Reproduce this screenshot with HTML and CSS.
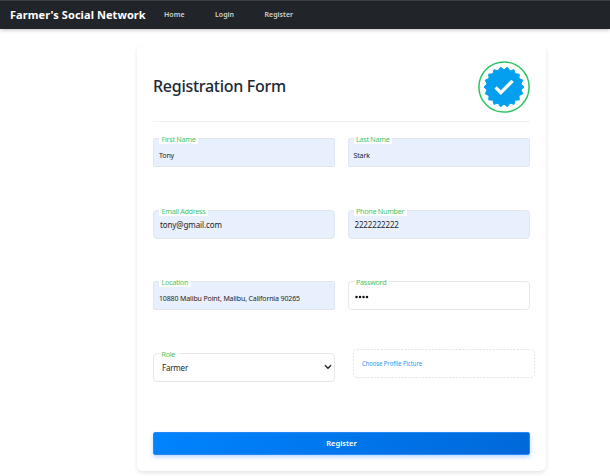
FILE: index.html
```html
<!DOCTYPE html>
<html lang="en">
<head>
<meta charset="utf-8">
<title>Farmer's Social Network</title>
<link rel="stylesheet" href="styles.css">
</head>
<body>
<nav class="navbar">
  <span class="brand">Farmer's Social Network</span>
  <span class="link home">Home</span>
  <span class="link login">Login</span>
  <span class="link register">Register</span>
</nav>
<main class="card">
  <header class="head">
    <h1>Registration Form</h1>
    <svg class="badge" viewBox="-26 -26 52 52">
      <circle r="25.1" fill="#fff" stroke="#2cc563" stroke-width="1.5"/>
      <path fill="#059ff0" stroke="#059ff0" stroke-width="1" stroke-linejoin="round" d="M20 0L16.94 2.99 18.79 6.84 14.9 8.6 15.32 12.86 11.06 13.18 10 17.32 5.88 16.16 3.47 19.7 0 17.2 -3.47 19.7 -5.88 16.16 -10 17.32 -11.06 13.18 -15.32 12.86 -14.9 8.6 -18.79 6.84 -16.94 2.99 -20 0 -16.94 -2.99 -18.79 -6.84 -14.9 -8.6 -15.32 -12.86 -11.06 -13.18 -10 -17.32 -5.88 -16.16 -3.47 -19.7 0 -17.2 3.47 -19.7 5.88 -16.16 10 -17.32 11.06 -13.18 15.32 -12.86 14.9 -8.6 18.79 -6.84 16.94 -2.99Z"/>
      <path d="M-8.4 .4L-3.2 5.6 8.6 -6.2" fill="none" stroke="#fff" stroke-width="3.3"/>
    </svg>
  </header>
  <form class="grid">
    <div class="field filled square"><label>First Name</label><span class="value small">Tony</span></div>
    <div class="field filled square"><label>Last Name</label><span class="value small">Stark</span></div>
    <div class="field filled"><label>Email Address</label><span class="value v-mail">tony@gmail.com</span></div>
    <div class="field filled"><label>Phone Number</label><span class="value v-phone">2222222222</span></div>
    <div class="field filled square"><label>Location</label><span class="value small">10880 Malibu Point, Malibu, California 90265</span></div>
    <div class="field"><label>Password</label>
      <svg class="dots" viewBox="0 0 14 4"><g fill="#111"><circle cx="1.5" cy="2" r="1.25"/><circle cx="5" cy="2" r="1.25"/><circle cx="8.5" cy="2" r="1.25"/><circle cx="12" cy="2" r="1.25"/></g></svg>
    </div>
    <div class="field"><label>Role</label><span class="value v-role">Farmer</span>
      <svg class="chevron" viewBox="0 0 8 6"><path d="M1 1.2L4 4.2 7 1.2" fill="none" stroke="#222" stroke-width="1.4"/></svg>
    </div>
    <svg class="upload" viewBox="0 0 182 29"><rect x=".5" y=".5" width="181" height="28" rx="3.5" fill="none" stroke="#e2e4e7" stroke-dasharray="2 1.4"/><text x="9" y="17" textLength="60" lengthAdjust="spacingAndGlyphs">Choose Profile Picture</text></svg>
  </form>
  <button class="submit">Register</button>
</main>
</body>
</html>
```
FILE: styles.css
```css
* { box-sizing: border-box; }
body {
  margin: 0;
  height: 476px;
  overflow: hidden;
  background: #fff;
  color: #212529;
  font-family: "Noto Sans", "Open Sans", sans-serif;
}
.navbar {
  height: 29px;
  display: flex;
  align-items: center;
  padding: 0 0 1px 10px;
  background: #212529;
  border-top: 1px solid #3a4145;
  box-shadow: 0 1px 4px rgba(0, 0, 0, .25);
  white-space: nowrap;
}
.brand { width: 154px; color: #fff; font-size: 11px; font-weight: 700; letter-spacing: .07px; }
.link { color: #d0d2d3; font-size: 7px; font-weight: 600; letter-spacing: .03px; }
.home { width: 51px; }
.login { width: 49.5px; }
.card {
  width: 409px;
  height: 426px;
  margin: 16px 0 0 137px;
  padding: 15px 16px;
  border-radius: 6px;
  background: #fff;
  box-shadow: 0 2px 4px rgba(0, 0, 0, .11);
}
.head {
  height: 62px;
  display: flex;
  justify-content: space-between;
  align-items: flex-start;
  border-bottom: 1px solid #f0f1f3;
}
h1 {
  margin: 15px 0 0;
  font-size: 16px;
  line-height: 22px;
  font-weight: 500;
  color: #1b2836;
  letter-spacing: -.28px;
}
.badge { width: 52px; height: 52px; margin-top: 1px; }
.grid {
  width: 377px;
  margin-top: 16px;
  display: grid;
  grid-template-columns: 182px 182px;
  column-gap: 12.5px;
  grid-auto-rows: 29px;
  row-gap: 42.6px;
}
.field {
  position: relative;
  display: flex;
  align-items: center;
  border: 1px solid #e6e8eb;
  border-radius: 4px;
  background: #fff;
  white-space: nowrap;
}
.filled { background: #e8f0fe; border-color: #e0e6ee; }
.square { border-radius: 2px; }
label {
  position: absolute;
  left: 5px;
  top: -4px;
  height: 9px;
  padding: 0 2.5px;
  background: #fff;
  color: #3fc66e;
  font-size: 7.2px;
  line-height: 9px;
  letter-spacing: -.28px;
}
.value { font-size: 8px; }
.small { font-size: 7px; padding: 6px 0 0 5px; letter-spacing: -.13px; }
.v-mail { padding: 0 0 0 6px; letter-spacing: -.1px; }
.v-phone { padding: 0 0 0 6px; letter-spacing: -.15px; }
.v-role { padding: 0 0 0 8px; letter-spacing: -.2px; }
.dots { width: 14px; height: 4px; margin: 2px 0 0 6px; }
.chevron { width: 8px; height: 6px; margin: 0 2px 0 auto; }
.upload { width: 182px; height: 29px; margin: -4px 0 0 5px; overflow: visible; }
.upload text { font-size: 6.4px; fill: #2490ff; }
.submit {
  display: block;
  width: 377px;
  height: 23px;
  margin-top: 50.2px;
  padding: 0;
  border: 1px solid #2688f4;
  border-radius: 2px;
  background: linear-gradient(135deg, #0084ff, #0068d9);
  box-shadow: 0 2px 4px rgba(0, 123, 255, .3);
  color: #fff;
  font: 600 7.5px/20px "Noto Sans", "Open Sans", sans-serif;
}
```
